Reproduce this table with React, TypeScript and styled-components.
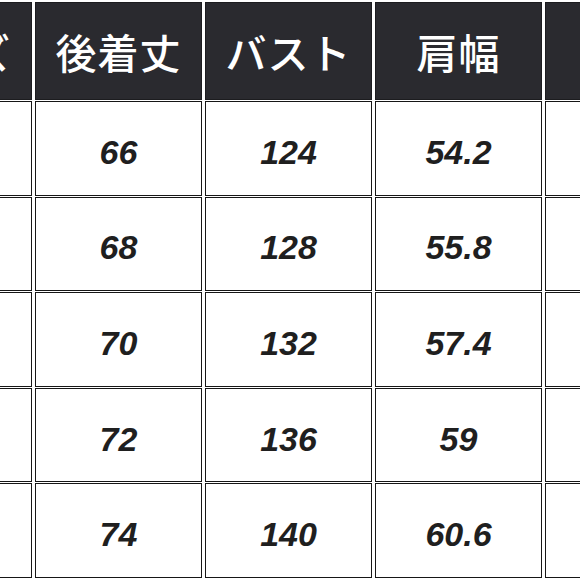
import React from 'react'
import styled, { createGlobalStyle } from 'styled-components'

const GlobalStyle = createGlobalStyle`
  html, body {
    margin: 0;
    padding: 0;
    background: #fff;
    overflow: hidden;
  }
`

const Viewport = styled.div`
  width: 580px;
  height: 580px;
  overflow: hidden;
  background: #fff;
`

// 5 columns of 167px plus 6 gaps of 3px
const Table = styled.table`
  border-collapse: separate;
  border-spacing: 3px 1px;
  width: 853px;
  min-width: 853px;
  margin-left: -138px;
  margin-top: 1px;
  table-layout: fixed;
`

const HeadCell = styled.th`
  width: 165px;
  height: 96px;
  padding: 0;
  background: #2a2a2f;
  border: 1px solid #1c1c1f;
  color: #fff;
  font-family: 'Noto Sans CJK JP', 'Noto Sans', sans-serif;
  font-size: 41px;
  font-weight: 500;
  letter-spacing: 1px;
  white-space: nowrap;
  text-align: center;
  vertical-align: middle;
`

const DataCell = styled.td`
  width: 165px;
  height: 94.6px;
  padding: 8px 0 0;
  box-sizing: border-box;
  background: #fff;
  border: 1px solid #161616;
  color: #1f1f1f;
  font-family: 'Liberation Sans', Arial, sans-serif;
  font-size: 34px;
  font-weight: 700;
  font-style: italic;
  white-space: nowrap;
  text-align: center;
  vertical-align: middle;
`

const headers = ['サイズ', '後着丈', 'バスト', '肩幅', '袖丈']

const rows = [
  ['M', '66', '124', '54.2', ''],
  ['L', '68', '128', '55.8', ''],
  ['XL', '70', '132', '57.4', ''],
  ['2XL', '72', '136', '59', ''],
  ['3XL', '74', '140', '60.6', ''],
]

const App: React.FC = () => {
  return (
    <Viewport>
      <GlobalStyle />
      <Table>
        <thead>
          <tr>
            {headers.map((h) => (
              <HeadCell key={h}>{h}</HeadCell>
            ))}
          </tr>
        </thead>
        <tbody>
          {rows.map((row) => (
            <tr key={row[0]}>
              {row.map((value, i) => (
                <DataCell key={i}>{value}</DataCell>
              ))}
            </tr>
          ))}
        </tbody>
      </Table>
    </Viewport>
  )
}

export default App
